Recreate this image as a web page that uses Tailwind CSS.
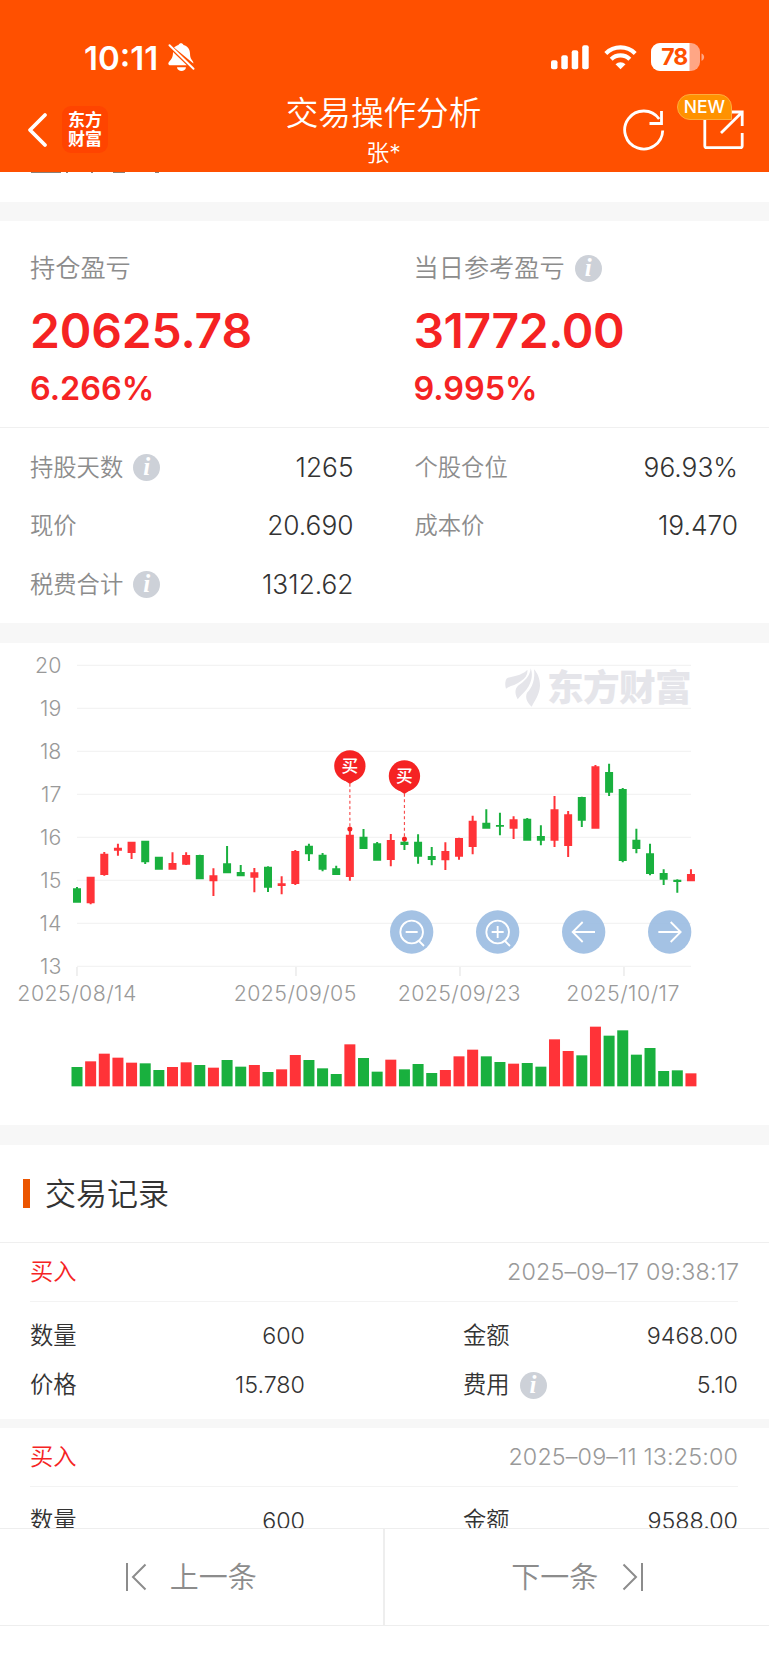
<!DOCTYPE html>
<html lang="zh-CN">

<head>
  <meta charset="UTF-8">
  <meta name="viewport" content="width=device-width, initial-scale=1.0">
  <title>交易操作分析</title>
  <script src="https://cdn.jsdelivr.net/npm/@tailwindcss/browser@4"></script>
</head>

<body class="flex flex-col w-[769px] h-[1665px] overflow-hidden bg-white text-[#333] font-['Inter','Noto_Sans_CJK_SC',sans-serif]">

  <!-- Header -->
  <header class="h-[172px] shrink-0 bg-[#ff5000] text-white pt-[35px]">
    <div class="flex items-center justify-between h-[44px] pl-[84px] pr-[64px]">
      <div class="flex items-center gap-[9px]">
        <span class="w-[75px] pt-[2px] text-[33px] leading-none font-semibold whitespace-nowrap">10:11</span>
        <svg class="w-[27px] h-[29px]" viewBox="0 0 27 29" fill="#fff">
          <path d="M6 4.5C8 2.8 9.5 2.2 10.5 1.9c.8-2.2 4.200-2.200 5 0C20 3 22 6.500 22 10.500c0 4 1 5.500 2.600 7.500.6.900.8 1.700.8 2.500z" />
          <path d="M5 9l13.800 13.300H2.500c-2.300 0-2.800-2-1.400-3.600C3.700 16 5 14 5 9z" />
          <path d="M9 24.200h9c-.5 5-8.500 5-9 0z" />
          <path d="M1.500 2.300L25.500 25.800" stroke="#fff" stroke-width="2" stroke-linecap="round" />
        </svg>
      </div>
      <div class="flex items-center">
        <svg class="w-[38px] h-[26px] mr-[15px]" viewBox="0 0 38 26" fill="#fff">
          <rect x="0" y="16.300" width="6.500" height="9" rx="2" />
          <rect x="10.300" y="11.300" width="6.500" height="14" rx="2" />
          <rect x="20.700" y="6.300" width="6.500" height="19" rx="2" />
          <rect x="31.200" y="1.300" width="6.500" height="24" rx="2" />
        </svg>
        <svg class="w-[33px] h-[26px] mr-[14px]" viewBox="0 0 33 26" fill="none" stroke="#fff" stroke-width="4.200">
          <path d="M1.800 9.400a21 21 0 0 1 29.400 0" />
          <path d="M7.200 15.200a13.300 13.300 0 0 1 18.600 0" />
          <path d="M16.500 25.300l-5-5a7.200 7.200 0 0 1 10 0z" fill="#fff" stroke="none" />
        </svg>
        <svg class="w-[54px] h-[28px]" viewBox="0 0 54 28">
          <defs>
            <clipPath id="battery"><rect width="49" height="28" rx="9" /></clipPath>
          </defs>
          <g clip-path="url(#battery)">
            <rect width="49" height="28" fill="#ffa685" />
            <rect width="38.500" height="28" fill="#fff" />
          </g>
          <path d="M50.500 10.500c3.500 1 3.500 6.200 0 7.200z" fill="#ffa685" />
          <text x="23.700" y="22.300" text-anchor="middle" fill="#ff5000" class="text-[23px] font-bold" textLength="27">78</text>
        </svg>
      </div>
    </div>

    <div class="grid grid-cols-[200px_1fr_200px] h-[93px]">
      <div class="flex items-center pt-[8px] pl-[27px]">
        <svg class="w-[21px] h-[36px]" viewBox="0 0 21 36" fill="none" stroke="#fff" stroke-width="3.800" stroke-linecap="round" stroke-linejoin="round">
          <path d="M18 3L3 18l15 15" />
        </svg>
        <div class="ml-[14px] w-[46px] h-[47px] rounded-[9px] bg-[#ff4400] flex flex-col justify-center items-center pt-px text-[17px] leading-[19px] font-bold">
          <span>东方</span>
          <span>财富</span>
        </div>
      </div>
      <div class="flex flex-col items-center pt-[10px] pr-[2px]">
        <h1 class="h-[48px] leading-[49px] text-[32.600px] font-[350]">交易操作分析</h1>
        <p class="h-[32px] leading-[32px] text-[23px] font-[350]">张*</p>
      </div>
      <div class="relative pt-[28px] pl-[53px]">
        <svg class="w-[124px] h-[46px]" viewBox="0 0 124 46" fill="none" stroke="#fff" stroke-width="2.800">
          <path d="M40.700 23.500a19 19 0 1 1-3.500-11.500" />
          <path d="M39.500 4v12.500H27.500" />
          <path d="M82.800 13v25.700q0 2 2 2h33.400q2 0 2-2V26" />
          <path d="M108 5h12.200v14M120 5.200L99 26" />
        </svg>
        <span class="absolute left-[108px] top-[15px] w-[55px] h-[26px] rounded-full rounded-br-none bg-[#ff9200] border border-[#ffab3d] flex items-center justify-center text-[17.500px] leading-none font-medium">NEW</span>
      </div>
    </div>
  </header>

  <main class="flex-1 min-h-0 overflow-hidden">
    <!-- heading scrolled under the header -->
    <div class="h-[29.500px]">
      <svg class="block w-full h-px" viewBox="0 0 769 1" fill="#8a8078">
        <path d="M31 0h30v1H31zM66 0h2v1h-2zM91 0h2v1h-2zM113 0h12v1h-12zM155 0h4v1h-4z" />
      </svg>
    </div>
    <div class="h-[19.500px] bg-[#f7f7f7]"></div>

    <!-- Profit summary -->
    <section class="grid grid-cols-2 h-[207px] pt-[23px] border-b border-[#f0f0f0]">
      <div class="pl-[30px]">
        <div class="flex items-center h-[48px] pt-[2px] text-[25.200px] font-[350] text-[#8c8c8c]">持仓盈亏</div>
        <div class="h-[78px] leading-[78px] text-[48px] font-semibold tracking-[-0.150px] text-[#f52323]">20625.78</div>
        <div class="h-[37px] leading-[37px] text-[32.400px] font-semibold text-[#f52323]">6.266%</div>
      </div>
      <div class="pl-[29px]">
        <div class="flex items-center gap-[10px] h-[48px] pt-[2px] text-[25.200px] font-[350] text-[#8c8c8c]">当日参考盈亏
          <span class="w-[27px] h-[27px] mb-[2px] rounded-full bg-[#cdd1d8] text-white text-center text-[25px] leading-[25px] font-bold italic font-['Liberation_Serif',serif]">i</span>
        </div>
        <div class="h-[78px] leading-[78px] text-[48px] font-semibold tracking-[-0.450px] text-[#f52323]">31772.00</div>
        <div class="h-[37px] leading-[37px] text-[32.400px] font-semibold text-[#f52323]">9.995%</div>
      </div>
    </section>

    <section class="grid grid-cols-2 gap-x-[61px] auto-rows-[58.500px] h-[195px] pt-[10px] pl-[30px] pr-[31px] font-[350]">
      <div class="flex items-center justify-between">
        <div class="flex items-center gap-[10px] text-[23.300px] text-[#8c8c8c]"><span class="pt-[2px]">持股天数</span>
          <span class="w-[27px] h-[27px] rounded-full bg-[#cdd1d8] text-white text-center text-[25px] leading-[25px] font-bold italic font-['Liberation_Serif',serif]">i</span>
        </div>
        <span class="text-[26.300px]">1265</span>
      </div>
      <div class="flex items-center justify-between">
        <span class="pt-[2px] text-[23.300px] text-[#8c8c8c]">个股仓位</span>
        <span class="text-[26.300px]">96.93%</span>
      </div>
      <div class="flex items-center justify-between">
        <span class="pt-[2px] text-[23.300px] text-[#8c8c8c]">现价</span>
        <span class="text-[26.300px]">20.690</span>
      </div>
      <div class="flex items-center justify-between">
        <span class="pt-[2px] text-[23.300px] text-[#8c8c8c]">成本价</span>
        <span class="text-[26.300px]">19.470</span>
      </div>
      <div class="flex items-center justify-between">
        <div class="flex items-center gap-[10px] text-[23.300px] text-[#8c8c8c]"><span class="pt-[2px]">税费合计</span>
          <span class="w-[27px] h-[27px] rounded-full bg-[#cdd1d8] text-white text-center text-[25px] leading-[25px] font-bold italic font-['Liberation_Serif',serif]">i</span>
        </div>
        <span class="text-[26.300px]">1312.62</span>
      </div>
    </section>
    <div class="h-[20px] bg-[#f7f7f7]"></div>

    <!-- K-line chart, drawn at 3 units per px -->
    <svg id="chart" class="block w-[769px] h-[482px]" viewBox="0 9 2307 1446">
      <g id="grid" stroke="#f3f3f3" stroke-width="4"></g>
      <g id="axis" fill="#999" class="text-[64px] font-[350]"></g>
      <g fill="#e5e5ea">
        <path d="M1582 89C1572 101 1550 108 1524 113C1515 116 1514 135 1518 146C1528 138 1548 136 1562 124C1578 113 1584 101 1582 89Z" />
        <path d="M1592 85C1591 103 1580 119 1560 133C1545 142 1542 157 1553 178C1562 166 1577 155 1586 139C1597 119 1598 101 1592 85Z" />
        <path d="M1602 88C1606 117 1597 144 1581 158C1575 172 1580 186 1595 200C1602 185 1619 163 1620 137C1620 114 1611 98 1602 88Z" />
        <text x="1641" y="183" textLength="434" class="text-[110px] font-black">东方财富</text>
      </g>
      <g id="candles"></g>
      <g id="volumes"></g>
      <g id="pins"></g>
      <g fill="#94b7df" fill-opacity="0.850">
        <circle cx="1235" cy="876" r="65" />
        <circle cx="1493" cy="876" r="65" />
        <circle cx="1751" cy="876" r="65" />
        <circle cx="2009" cy="876" r="65" />
      </g>
      <g fill="none" stroke="#fff" stroke-width="5.500">
        <path d="M1217 876h36M1257 903l15 15M1475 876h36M1493 858v36M1515 903l15 15" />
        <circle cx="1235" cy="876" r="34" />
        <circle cx="1493" cy="876" r="34" />
        <path d="M1785 876h-67M1748 846l-30 30 30 30M1975 876h67M2012 846l30 30-30 30" />
      </g>
    </svg>
    <div class="h-[20px] bg-[#f7f7f7]"></div>

    <!-- Trade records -->
    <section class="font-[350]">
      <div class="flex items-center h-[98px] pl-[23px] border-b border-[#efefef]">
        <span class="w-[7px] h-[29px] bg-[#eb5500]"></span>
        <h2 class="ml-[15px] pt-px text-[31px]">交易记录</h2>
      </div>

      <div class="pl-[30px] pr-[31px]">
        <div class="flex items-center justify-between h-[59px] border-b border-[#f3f3f3] text-[23.300px]">
          <span class="text-[#f52323]">买入</span>
          <span class="w-[231px] text-right whitespace-nowrap text-[#999] tracking-[0.150px]">2025–09–17 09:38:17</span>
        </div>
        <div class="grid grid-cols-2 gap-x-[158px] auto-rows-[49px] h-[117px] pt-[9.500px] text-[23.300px]">
          <div class="flex items-center justify-between"><span class="pt-px">数量</span><span>600</span></div>
          <div class="flex items-center justify-between"><span class="pt-px">金额</span><span>9468.00</span></div>
          <div class="flex items-center justify-between"><span class="pt-px">价格</span><span>15.780</span></div>
          <div class="flex items-center justify-between">
            <div class="flex items-center gap-[10px]"><span class="pt-px">费用</span>
              <span class="w-[27px] h-[27px] rounded-full bg-[#cdd1d8] text-white text-center text-[25px] leading-[25px] font-bold italic font-['Liberation_Serif',serif]">i</span>
            </div>
            <span>5.10</span>
          </div>
        </div>
      </div>
      <div class="h-[9px] bg-[#f7f7f7]"></div>

      <div class="pl-[30px] pr-[31px]">
        <div class="flex items-center justify-between h-[59px] border-b border-[#f3f3f3] text-[23.300px]">
          <span class="text-[#f52323]">买入</span>
          <span class="w-[231px] text-right whitespace-nowrap text-[#999] tracking-[0.150px]">2025–09–11 13:25:00</span>
        </div>
        <div class="grid grid-cols-2 gap-x-[158px] auto-rows-[49px] h-[117px] pt-[9.500px] text-[23.300px]">
          <div class="flex items-center justify-between"><span class="pt-px">数量</span><span>600</span></div>
          <div class="flex items-center justify-between"><span class="pt-px">金额</span><span>9588.00</span></div>
        </div>
      </div>
    </section>
  </main>

  <!-- Bottom navigation -->
  <footer class="h-[137px] shrink-0 bg-white">
    <div class="grid grid-cols-2 h-[98px] border-y border-[#eee] text-[29px] font-[350] text-[#8c8c8c]">
      <a class="flex items-center justify-center gap-[23px] border-r-2 border-[#eee] pr-px">
        <svg class="w-[22px] h-[28px]" viewBox="0 0 22 28" fill="none" stroke="#8c8c8c" stroke-width="2">
          <path d="M2 0v28M20.500 1.500L8 14l12.500 12.500" />
        </svg>
        <span class="pt-px">上一条</span>
      </a>
      <a class="flex items-center justify-center gap-[23px] pl-px">
        <span class="pt-px">下一条</span>
        <svg class="w-[22px] h-[28px]" viewBox="0 0 22 28" fill="none" stroke="#8c8c8c" stroke-width="2">
          <path d="M21 0v28M2.500 1.500L15 14L2.500 26.500" />
        </svg>
      </a>
    </div>
  </footer>

  <script>
    // [up, body top, body bottom, wick top, wick bottom, volume top]
    const data = [
      [0, 745, 788, 741, 788, 1281], [1, 710, 790, 710, 793, 1264], [1, 641, 705, 636, 707, 1241],
      [1, 623, 632, 611, 647, 1253], [1, 605, 639, 605, 657, 1268], [0, 602, 667, 602, 672, 1270],
      [0, 650, 689, 650, 689, 1290], [1, 669, 689, 637, 689, 1281], [1, 645, 674, 637, 675, 1267],
      [0, 645, 718, 644, 718, 1275], [1, 706, 724, 685, 768, 1283], [0, 670, 700, 618, 700, 1260],
      [0, 696, 709, 675, 709, 1280], [1, 697, 713, 684, 757, 1275], [0, 680, 743, 679, 756, 1296],
      [1, 730, 738, 709, 763, 1288], [1, 633, 732, 630, 735, 1245], [0, 617, 643, 611, 663, 1260],
      [0, 644, 689, 639, 694, 1285], [0, 685, 705, 677, 705, 1302], [1, 584, 711, 572, 722, 1213],
      [0, 590, 627, 567, 627, 1254], [0, 610, 662, 606, 662, 1295], [1, 600, 660, 582, 679, 1259],
      [0, 605, 615, 602, 630, 1288], [0, 605, 650, 583, 671, 1272], [0, 648, 660, 621, 676, 1299],
      [1, 633, 661, 607, 690, 1290], [1, 594, 650, 593, 659, 1249], [1, 542, 621, 527, 643, 1229],
      [0, 548, 566, 508, 566, 1249], [0, 555, 560, 518, 586, 1266], [1, 538, 566, 529, 597, 1271],
      [0, 536, 602, 534, 602, 1269], [0, 588, 602, 556, 616, 1280], [1, 508, 602, 468, 621, 1198],
      [1, 523, 618, 513, 651, 1233], [0, 471, 542, 470, 561, 1246], [1, 379, 566, 375, 566, 1160],
      [0, 396, 458, 371, 468, 1187], [0, 447, 663, 444, 667, 1171], [0, 599, 627, 566, 640, 1244],
      [0, 640, 702, 611, 706, 1224], [0, 699, 719, 688, 735, 1293], [0, 719, 726, 718, 758, 1291],
      [1, 702, 724, 688, 724, 1300]
    ];
    const x = i => 231 + i * 40.93;
    const put = (id, html) => document.getElementById(id).innerHTML = html;

    let grid = "", axis = "";
    for (let p = 20; p >= 13; p--) {
      const y = 76 + (20 - p) * 129;
      grid += `<path d="M231 ${y}H2073" />`;
      axis += `<text x="184" y="${y + 23}" text-anchor="end">${p}</text>`;
    }
    const dates = [["2025/08/14", 231, 55, 352], ["2025/09/05", 888, 704, 363], ["2025/09/23", 1380, 1196, 363], ["2025/10/17", 1872, 1702, 334]];
    dates.forEach(([label, tick, left, width]) => {
      grid += `<path d="M${tick} 981v27" stroke="#e8e8e8" />`;
      axis += `<text x="${left - 3}" y="1083" textLength="${width + 5}">${label}</text>`;
    });
    put("grid", grid);
    put("axis", axis);

    let candles = "", volumes = "";
    data.forEach(([up, top, bottom, high, low, vol], i) => {
      const color = up ? "#ff3338" : "#19b03e";
      candles += `<path fill="${color}" d="M${x(i) - 12} ${top}h24V${bottom}h-24zM${x(i) - 3} ${high}h6V${low}h-6z" />`;
      volumes += `<rect fill="${color}" x="${x(i) - 16.5}" y="${vol}" width="33" height="${1339 - vol}" />`;
    });
    put("candles", candles);
    put("volumes", volumes);

    // buy markers
    put("pins", [[20, 378], [24, 408]].map(([i, y]) => `
      <path d="M${x(i)} ${y + 53}V${y + 189}" stroke="#f52323" stroke-opacity="0.8" stroke-width="3.5" stroke-dasharray="9 8" />
      <circle cx="${x(i)}" cy="${y + 189}" r="7.500" fill="#f52323" />
      <circle cx="${x(i)}" cy="${y}" r="47" fill="#f52323" />
      <path d="M${x(i) - 28} ${y + 35}L${x(i)} ${y + 54}L${x(i) + 28} ${y + 35}z" fill="#f52323" />
      <text x="${x(i)}" y="${y + 19}" text-anchor="middle" fill="#fff" class="text-[50px] font-medium">买</text>`).join(""));
  </script>

</body>

</html>
